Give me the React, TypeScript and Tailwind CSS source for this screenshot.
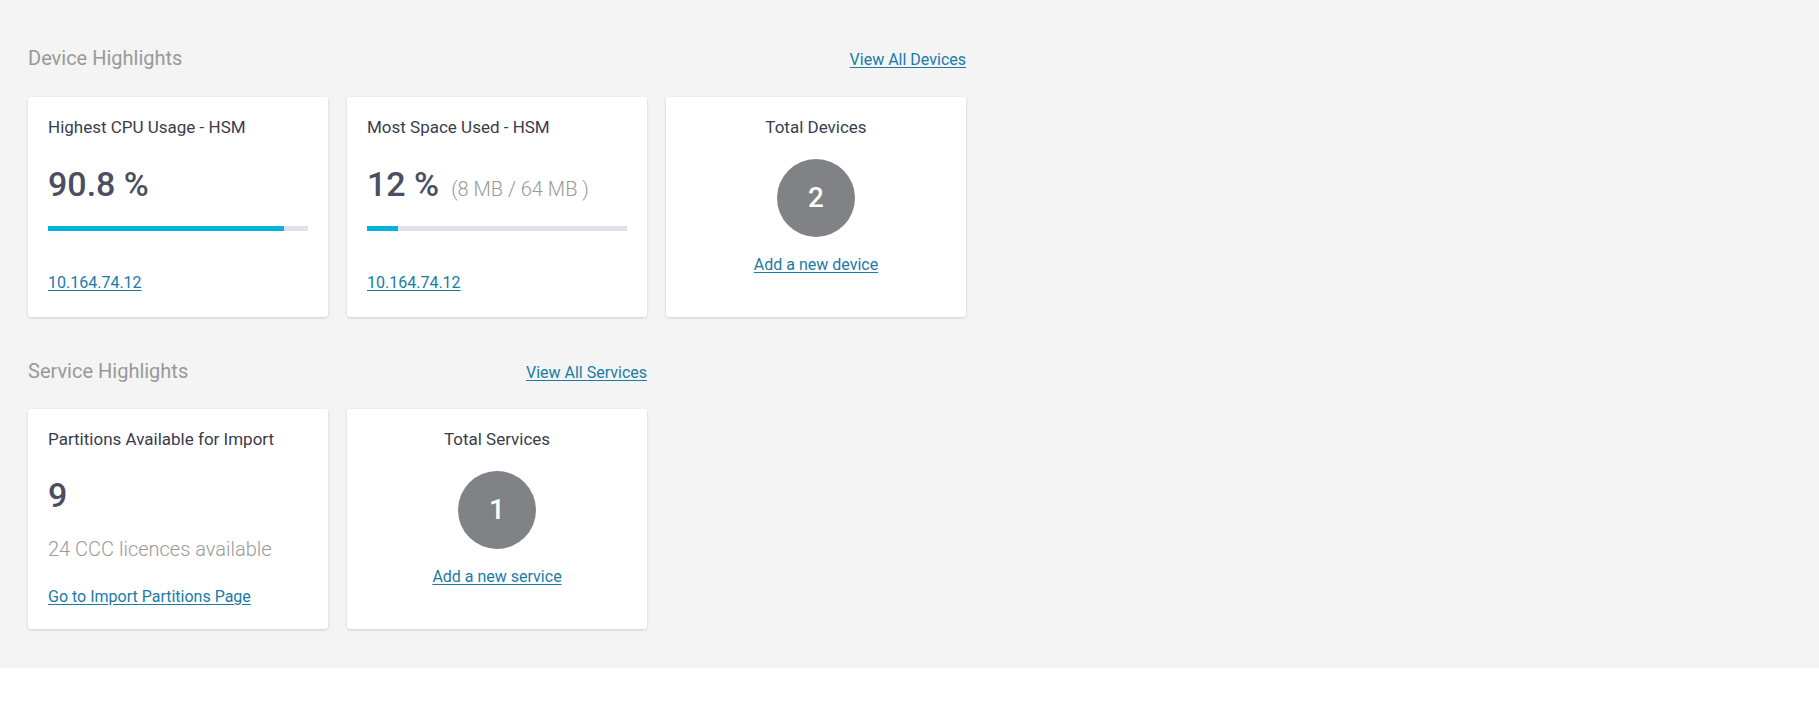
const font = { fontFamily: 'Roboto, "Liberation Sans", sans-serif' };

function Card({ children, center = false }: { children: React.ReactNode; center?: boolean }) {
  return (
    <div
      className={`w-[300px] h-[220px] bg-white rounded-[3px] shadow-[0_1px_3px_rgba(0,0,0,0.16)] px-5 pt-5 flex flex-col ${center ? 'items-center' : ''}`}
    >
      {children}
    </div>
  );
}

function Title({ text }: { text: string }) {
  return <div className="text-[17px] leading-5 text-[#3a3c4d]">{text}</div>;
}

function LinkText({ text }: { text: string }) {
  return <a className="text-[16px] leading-5 text-[#1a7ba6] underline underline-offset-2 cursor-pointer">{text}</a>;
}

function Progress({ pct }: { pct: number }) {
  return (
    <div className="h-[5px] w-full bg-[#e2e0ec]">
      <div className="h-full bg-[#00b5d9]" style={{ width: `${pct}%` }} />
    </div>
  );
}

function Counter({ title, value, link }: { title: string; value: string; link: string }) {
  return (
    <Card center>
      <Title text={title} />
      <div className="mt-[22px] w-[78px] h-[78px] rounded-full bg-[#808285] flex items-center justify-center text-white text-[28px] font-medium">
        {value}
      </div>
      <div className="mt-4">
        <LinkText text={link} />
      </div>
    </Card>
  );
}

function Header({ title, link }: { title: string; link: string }) {
  return (
    <div className="flex justify-between items-baseline">
      <h2 className="text-[20px] leading-6 text-[#999999]">{title}</h2>
      <LinkText text={link} />
    </div>
  );
}

export default function App() {
  return (
    <div style={font} className="w-full min-h-[722px] bg-white">
      <div className="bg-[#f4f4f4] h-[668px] pl-[28px] pt-[46px]">
        <div className="w-[938px] flex flex-col">
          <Header title="Device Highlights" link="View All Devices" />
          <div className="mt-[27px] flex gap-[19px]">
            <Card>
              <Title text="Highest CPU Usage - HSM" />
              <div className="mt-[27px] h-10 text-[34px] leading-10 font-medium text-[#4a4e62]">90.8 %</div>
              <div className="mt-[22px]">
                <Progress pct={90.8} />
              </div>
              <div className="mt-10">
                <LinkText text="10.164.74.12" />
              </div>
            </Card>
            <Card>
              <Title text="Most Space Used - HSM" />
              <div className="mt-[27px] h-10 flex items-baseline gap-3 leading-10">
                <span className="text-[34px] font-medium text-[#4a4e62]">12 %</span>
                <span className="text-[20px] font-light text-[#9a9a9a]">(8 MB / 64 MB )</span>
              </div>
              <div className="mt-[22px]">
                <Progress pct={12} />
              </div>
              <div className="mt-10">
                <LinkText text="10.164.74.12" />
              </div>
            </Card>
            <Counter title="Total Devices" value="2" link="Add a new device" />
          </div>
        </div>
        <div className="w-[619px] flex flex-col mt-[42px]">
          <Header title="Service Highlights" link="View All Services" />
          <div className="mt-[26px] flex gap-[19px]">
            <Card>
              <Title text="Partitions Available for Import" />
              <div className="mt-[26px] h-10 text-[34px] leading-10 font-medium text-[#4a4e62]">9</div>
              <div className="mt-[22px] text-[20px] leading-6 font-light text-[#9a9a9a]">24 CCC licences available</div>
              <div className="mt-6">
                <LinkText text="Go to Import Partitions Page" />
              </div>
            </Card>
            <Counter title="Total Services" value="1" link="Add a new service" />
          </div>
        </div>
      </div>
    </div>
  );
}
